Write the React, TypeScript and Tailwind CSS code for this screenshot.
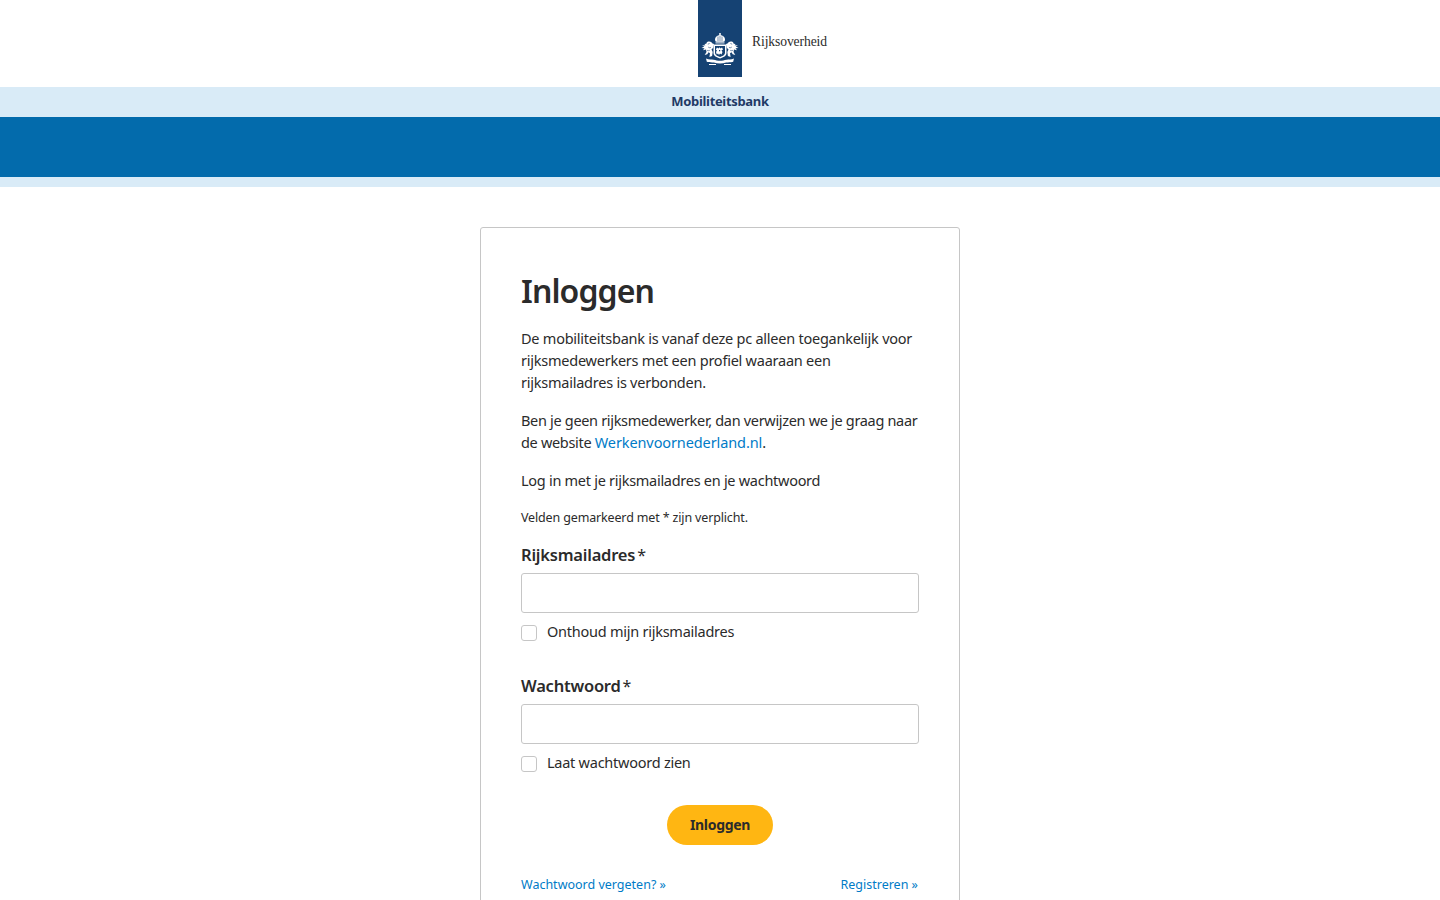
import React from 'react';

const sans = { fontFamily: '"Noto Sans", sans-serif' };

// Simplified Rijkswapen: crown, shield, two lions and the banner
const Emblem: React.FC = () => (
  <svg viewBox="0 0 38 33" className="w-[38px] h-[33px]" fill="#fff">
    {/* crown */}
    <circle cx="19" cy="1" r="1" />
    <path d="M19 2c-3 .4-5 2-5 4.200 0 1 .3 1.800.8 2.600h8.400c.5-.8.8-1.600.8-2.600C24 4 22 2.400 19 2z" />
    <path d="M17 3.500v4.500M19 3v5M21 3.500v4.500" stroke="#154273" strokeWidth=".6" fill="none" />
    <path d="M14.500 9.400h9v1h-9z" />
    {/* shield */}
    <path d="M12.500 11.500h13v8.500c0 2.800-3.200 4.400-6.500 5.500-3.300-1.100-6.500-2.700-6.500-5.500z" />
    <path d="M14 13h10v7c0 2-2.500 3.200-5 4-2.500-.8-5-2-5-4z" fill="#154273" />
    <path d="M16 14.500l1.500 1 1-1.200 1 1.200 1.500-1 1 2-1.500 1 1 1.500-1 2.500-1.500-1-1 1.500-1-1.500-1.200 1-.8-2.500 1-1.500-1.200-1z" />
    <path d="M18 17h1.200v1.200H18z" fill="#154273" />
    {/* left lion */}
    <path d="M11.500 10.500c-.8-1.600-2.400-2.300-4-2-1.300.3-2 1.200-2.200 2.300L3.400 11l1 1.200L1 12.600l2.300 1L.5 15l3 .2-1.500 2 3-.6.500 2.400-1.800 3 2.600-.7 1.200-2 1.500 1-.6 3.700 2.700-1 .6-3.900-1.200-2.500 1.700-1.800.8-3.800z" />
    <path d="M6.800 11.200l1.800-.7M7.200 14c1 .8 1.600 1 2.800.3M6 17.200c1 .6 1.800.6 2.800.1" stroke="#154273" strokeWidth=".6" fill="none" />
    {/* right lion */}
    <path d="M26.500 10.500c.8-1.600 2.400-2.300 4-2 1.300.3 2 1.200 2.200 2.300l1.900.2-1 1.200 3.400.4-2.300 1 2.800 1.400-3 .2 1.500 2-3-.6-.5 2.400 1.800 3-2.600-.7-1.200-2-1.500 1 .6 3.700-2.700-1-.6-3.900 1.200-2.500-1.700-1.800-.8-3.800z" />
    <path d="M31.200 11.200l-1.800-.7M30.800 14c-1 .8-1.600 1-2.800.3M32 17.200c-1 .6-1.800.6-2.800.1" stroke="#154273" strokeWidth=".6" fill="none" />
    {/* banner */}
    <path d="M5 25.500c3 1.200 5.500.8 7.500 1.200 2 .5 4.300 1 6.500 1s4.500-.5 6.500-1c2-.4 4.500 0 7.500-1.200l-.8 3.200c-2.700.8-5 .4-7 .9-2 .6-4.200 1-6.200 1s-4.200-.4-6.200-1c-2-.5-4.300-.1-7-.9z" />
    <path d="M8 31h7v1H8zM23 31h7v1h-7z" />
  </svg>
);

const Field: React.FC<{ label: string; check: string }> = ({ label, check }) => (
  <div>
    <label className="block text-[16.5px] leading-[22px] font-semibold text-[#2b2b2b] tracking-[-0.22px]">
      {label}
      <span className="font-normal text-[16px] ml-[2px]">*</span>
    </label>
    <input type="text" className="block mt-[7px] w-full h-[40px] bg-white border border-[#c6c6c6] rounded-[3px]" />
    <label className="flex items-center mt-[9px] h-[22px] text-[14.5px] text-[#2b2b2b] tracking-[-0.25px]">
      <span className="block w-[16px] h-[16px] border border-[#c6c6c6] rounded-[3px] bg-white mr-[10px]" />
      <span className="-translate-y-[1px]">{check}</span>
    </label>
  </div>
);

const App: React.FC = () => {
  return (
    <div className="h-[900px] overflow-hidden bg-white" style={sans}>
      <header className="h-[87px] grid grid-cols-[1fr_44px_1fr]">
        <div />
        <div className="w-[44px] h-[77px] bg-[#154273] flex flex-col justify-end items-center pb-[11px]">
          <Emblem />
        </div>
        <span className="pl-[10px] pt-[33px] text-[13.6px] leading-[18px] text-[#2b2b2b] tracking-[-0.1px]" style={{ fontFamily: '"Liberation Serif", serif' }}>
          Rijksoverheid
        </span>
      </header>

      <div className="h-[30px] bg-[#d9ebf7] flex items-center justify-center text-[13px] font-bold text-[#1f3a66] tracking-[-0.33px]">
        Mobiliteitsbank
      </div>
      <div className="h-[60px] bg-[#036bac]" />
      <div className="h-[10px] bg-[#d9ebf7]" />

      <main className="flex justify-center pt-[40px]">
        <section className="w-[480px] h-[800px] shrink-0 border border-[#c6c6c6] rounded-[3px] px-[40px] pt-[40px]">
          <h1 className="text-[32px] leading-[46px] font-semibold text-[#2b2b2b] tracking-[-0.9px]">Inloggen</h1>

          <div className="mt-[13px] text-[14.5px] leading-[22px] text-[#2b2b2b] tracking-[-0.24px]">
            <p>De mobiliteitsbank is vanaf deze pc alleen toegankelijk voor rijksmedewerkers met een profiel waaraan een rijksmailadres is verbonden.</p>
            <p className="mt-[16px] tracking-[-0.32px]">
              Ben je geen rijksmedewerker, dan verwijzen we je graag naar de website{' '}
              <a className="text-[#007bc7] tracking-[-0.1px]">Werkenvoornederland.nl</a>.
            </p>
            <p className="mt-[16px] tracking-[-0.28px]">Log in met je rijksmailadres en je wachtwoord</p>
          </div>

          <p className="mt-[18px] text-[12.5px] leading-[18px] text-[#2b2b2b] tracking-[-0.15px]">Velden gemarkeerd met * zijn verplicht.</p>

          <div className="mt-[17px]">
            <Field label="Rijksmailadres" check="Onthoud mijn rijksmailadres" />
          </div>
          <div className="mt-[31px]">
            <Field label="Wachtwoord" check="Laat wachtwoord zien" />
          </div>

          <div className="flex justify-center mt-[30px]">
            <button className="w-[106px] h-[40px] pb-[2px] rounded-full bg-[#ffb612] text-[14px] font-bold text-[#2b2b2b] tracking-[-0.3px]">Inloggen</button>
          </div>

          <div className="flex justify-between mt-[31px] pr-[1px] text-[12.5px] leading-[18px] text-[#007bc7]">
            <a>Wachtwoord vergeten? »</a>
            <a>Registreren »</a>
          </div>
        </section>
      </main>
    </div>
  );
};

export default App;
